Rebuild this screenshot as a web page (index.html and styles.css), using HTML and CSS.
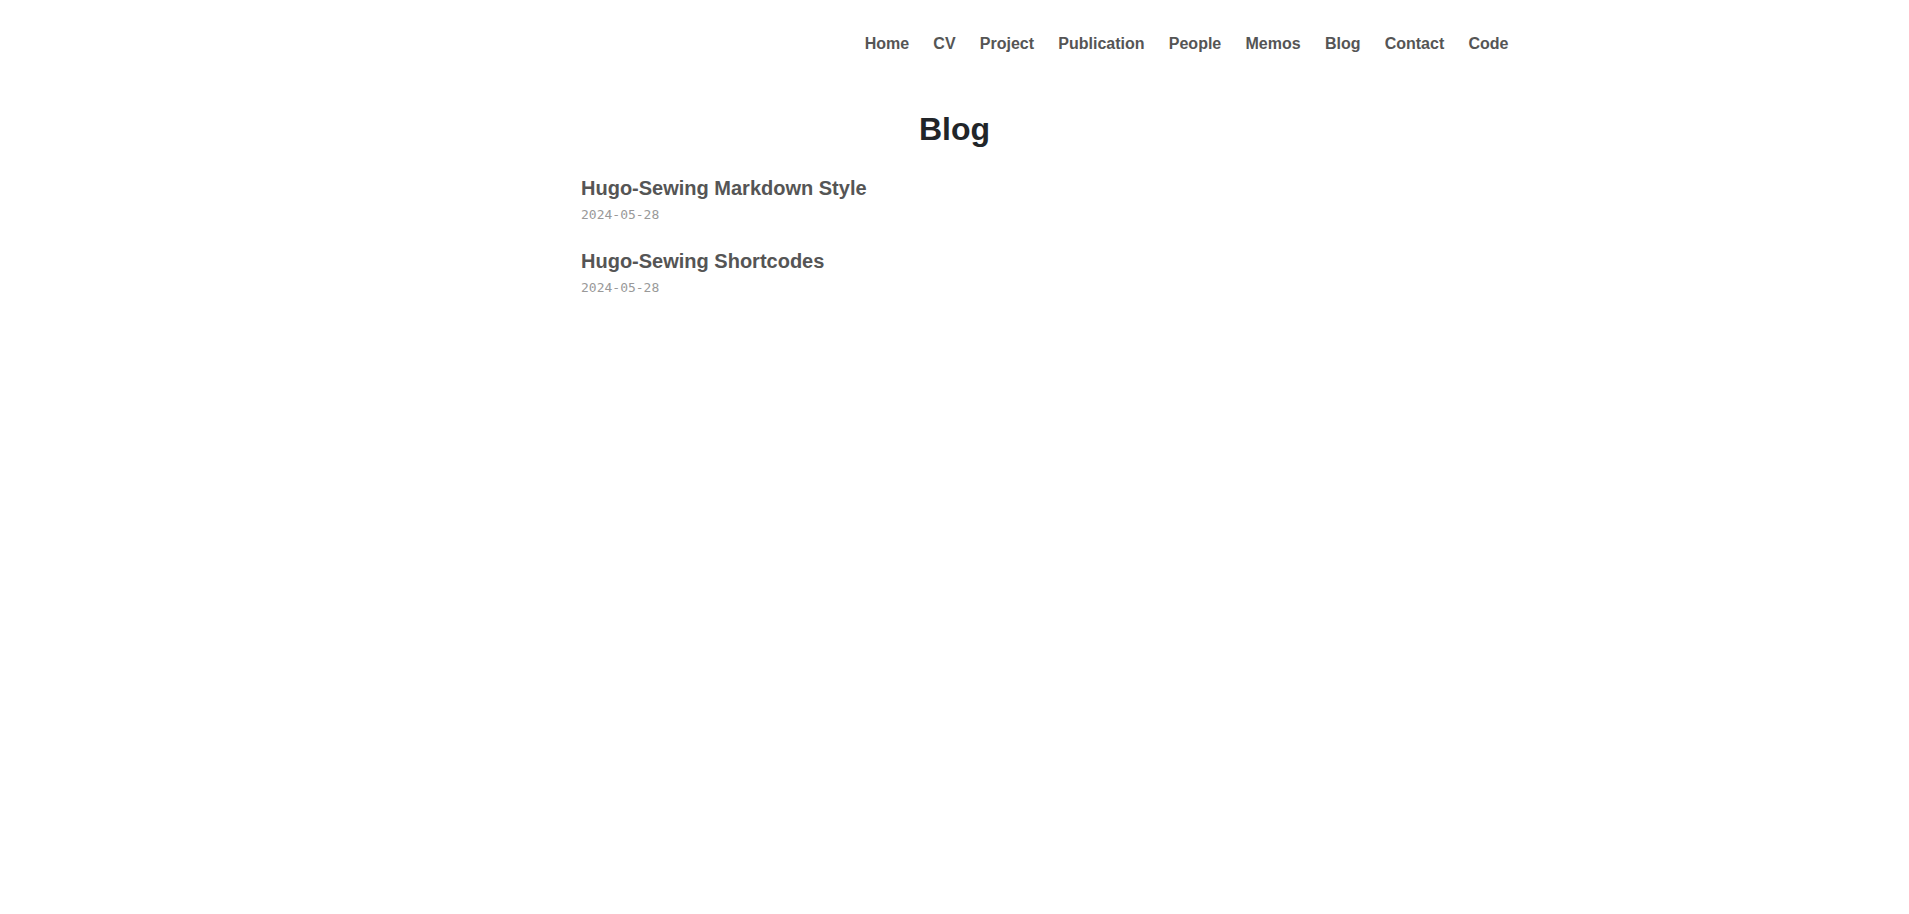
FILE: index.html
```html
<!DOCTYPE html>
<html lang="en">
<head>
<meta charset="utf-8">
<title>Blog</title>
<link rel="stylesheet" href="styles.css">
</head>
<body>
<header class="site-header">
  <nav class="nav">
    <a class="nav-link" href="#">Home</a>
    <a class="nav-link" href="#">CV</a>
    <a class="nav-link" href="#">Project</a>
    <a class="nav-link" href="#">Publication</a>
    <a class="nav-link" href="#">People</a>
    <a class="nav-link" href="#">Memos</a>
    <a class="nav-link" href="#">Blog</a>
    <a class="nav-link" href="#">Contact</a>
    <a class="nav-link" href="#">Code</a>
  </nav>
</header>
<main class="content">
  <h1 class="page-title">Blog</h1>
  <ul class="post-list">
    <li class="post">
      <a class="post-title" href="#">Hugo-Sewing Markdown Style</a>
      <div class="post-date">2024-05-28</div>
    </li>
    <li class="post">
      <a class="post-title" href="#">Hugo-Sewing Shortcodes</a>
      <div class="post-date">2024-05-28</div>
    </li>
  </ul>
</main>
</body>
</html>
```
FILE: styles.css
```css
html, body {
  margin: 0;
  padding: 0;
  background: #fff;
}
body {
  font-family: "Liberation Sans", Arial, sans-serif;
  color: #212529;
}
.site-header {
  padding-top: 34px;
}
.nav {
  width: 1108px;
  margin: 0 auto;
  display: flex;
  justify-content: flex-end;
  gap: 24.25px;
}
.nav-link {
  font-size: 16px;
  line-height: 20px;
  font-weight: bold;
  color: #555;
  text-decoration: none;
}
.content {
  width: 747px;
  margin: 0 auto;
}
.page-title {
  margin: 56px 0 0;
  font-size: 32px;
  line-height: 38px;
  font-weight: bold;
  text-align: center;
  color: #212529;
}
.post-list {
  list-style: none;
  margin: 28px 0 0;
  padding: 0;
  display: flex;
  flex-direction: column;
  gap: 24px;
}
.post {
  display: flex;
  flex-direction: column;
  align-items: flex-start;
  gap: 5px;
}
.post-title {
  font-size: 20px;
  line-height: 24px;
  font-weight: bold;
  color: #555;
  text-decoration: none;
}
.post-date {
  font-family: "DejaVu Sans Mono", "Liberation Mono", monospace;
  font-size: 13px;
  line-height: 20px;
  color: #999;
}
```
